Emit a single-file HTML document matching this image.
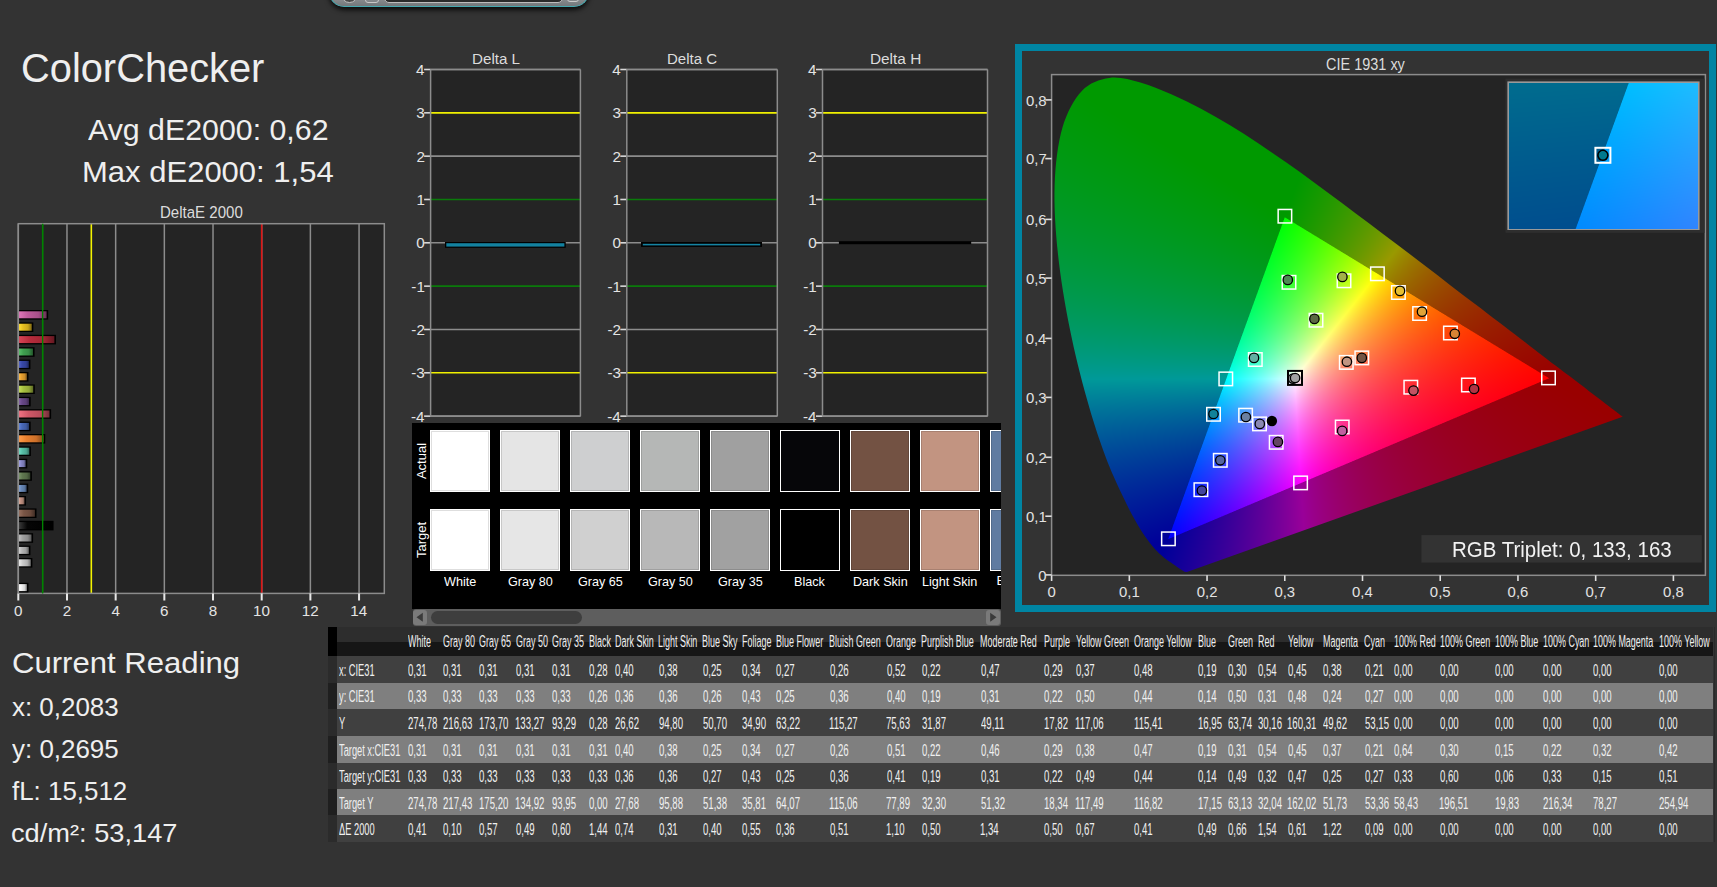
<!DOCTYPE html>
<html><head><meta charset="utf-8"><title>ColorChecker</title>
<style>
html,body{margin:0;padding:0;}
body{width:1717px;height:887px;background:#333333;position:relative;overflow:hidden;font-family:"Liberation Sans",sans-serif;}
.t{position:absolute;white-space:nowrap;line-height:1;transform-origin:0 0;}
.a{position:absolute;box-sizing:border-box;}
svg.ov{position:absolute;left:0;top:0;}
canvas{position:absolute;}
</style></head><body>

<div class="a" style="left:329px;top:-40px;width:260px;height:47px;border-radius:0 0 15px 15px;background:linear-gradient(#9a9da0 70%,#74787b);border:1.3px solid #45a9b0;border-top:none;box-shadow:0 3px 5px rgba(0,0,0,0.8);"></div>
<div class="a" style="left:383.5px;top:-12px;width:179px;height:14.5px;border-radius:0 0 5px 5px;background:#2a2a2a;border:1.2px solid #bdbdbd;"></div>
<div class="a" style="left:341px;top:-14px;width:17px;height:17px;border-radius:0 0 9px 9px;background:#4a4a4a;border:1.2px solid #c0c0c0;"></div>
<div class="a" style="left:365px;top:-10px;width:14px;height:12.5px;border-radius:0 0 3px 3px;border:1px solid #c8c8c8;"></div>
<div class="a" style="left:567px;top:-10px;width:12px;height:12px;border-radius:0 0 3px 3px;border:1px solid #c8c8c8;"></div>
<div class="t" style="left:21.31px;top:49.00px;font-size:40.29px;color:#efefef;transform:scaleX(0.9883);">ColorChecker</div>
<div class="t" style="left:88.32px;top:115.00px;font-size:29.35px;color:#efefef;transform:scaleX(1.0333);">Avg dE2000: 0,62</div>
<div class="t" style="left:82.14px;top:157.00px;font-size:29.50px;color:#efefef;transform:scaleX(1.0512);">Max dE2000: 1,54</div>
<div class="t" style="left:159.96px;top:205.00px;font-size:15.68px;color:#dcdcdc;transform:scaleX(0.9595);">DeltaE 2000</div>
<div class="t" style="left:11.55px;top:648.00px;font-size:29.50px;color:#efefef;transform:scaleX(1.0539);">Current Reading</div>
<div class="t" style="left:11.98px;top:695.00px;font-size:25.61px;color:#efefef;transform:scaleX(1.0123);">x: 0,2083</div>
<div class="t" style="left:12.24px;top:737.00px;font-size:25.32px;color:#efefef;transform:scaleX(1.0246);">y: 0,2695</div>
<div class="t" style="left:11.91px;top:778.00px;font-size:26.33px;color:#efefef;transform:scaleX(0.9844);">fL: 15,512</div>
<div class="t" style="left:11.14px;top:820.00px;font-size:26.33px;color:#efefef;transform:scaleX(1.0340);">cd/m²: 53,147</div>
<div class="t" style="left:14.06px;top:603.00px;font-size:15.20px;color:#e4e4e4;">0</div>
<div class="t" style="left:62.76px;top:603.00px;font-size:15.20px;color:#e4e4e4;">2</div>
<div class="t" style="left:111.48px;top:603.00px;font-size:15.20px;color:#e4e4e4;">4</div>
<div class="t" style="left:160.07px;top:603.00px;font-size:15.20px;color:#e4e4e4;">6</div>
<div class="t" style="left:208.80px;top:603.00px;font-size:15.20px;color:#e4e4e4;">8</div>
<div class="t" style="left:252.98px;top:603.00px;font-size:15.20px;color:#e4e4e4;">10</div>
<div class="t" style="left:301.75px;top:603.00px;font-size:15.20px;color:#e4e4e4;">12</div>
<div class="t" style="left:350.26px;top:603.00px;font-size:15.20px;color:#e4e4e4;">14</div>
<div class="t" style="left:472.05px;top:51.00px;font-size:15.40px;color:#dcdcdc;transform:scaleX(0.9852);">Delta L</div>
<div class="t" style="left:416.08px;top:62.00px;font-size:15.20px;color:#e4e4e4;">4</div>
<div class="t" style="left:416.31px;top:105.00px;font-size:15.20px;color:#e4e4e4;">3</div>
<div class="t" style="left:416.42px;top:149.00px;font-size:15.20px;color:#e4e4e4;">2</div>
<div class="t" style="left:416.39px;top:192.00px;font-size:15.20px;color:#e4e4e4;">1</div>
<div class="t" style="left:416.23px;top:235.00px;font-size:15.20px;color:#e4e4e4;">0</div>
<div class="t" style="left:411.33px;top:279.00px;font-size:15.20px;color:#e4e4e4;">-1</div>
<div class="t" style="left:411.37px;top:322.00px;font-size:15.20px;color:#e4e4e4;">-2</div>
<div class="t" style="left:411.26px;top:365.00px;font-size:15.20px;color:#e4e4e4;">-3</div>
<div class="t" style="left:411.03px;top:409.00px;font-size:15.20px;color:#e4e4e4;">-4</div>
<div class="t" style="left:667.36px;top:51.00px;font-size:15.40px;color:#dcdcdc;transform:scaleX(0.9758);">Delta C</div>
<div class="t" style="left:612.28px;top:62.00px;font-size:15.20px;color:#e4e4e4;">4</div>
<div class="t" style="left:612.51px;top:105.00px;font-size:15.20px;color:#e4e4e4;">3</div>
<div class="t" style="left:612.62px;top:149.00px;font-size:15.20px;color:#e4e4e4;">2</div>
<div class="t" style="left:612.59px;top:192.00px;font-size:15.20px;color:#e4e4e4;">1</div>
<div class="t" style="left:612.43px;top:235.00px;font-size:15.20px;color:#e4e4e4;">0</div>
<div class="t" style="left:607.53px;top:279.00px;font-size:15.20px;color:#e4e4e4;">-1</div>
<div class="t" style="left:607.57px;top:322.00px;font-size:15.20px;color:#e4e4e4;">-2</div>
<div class="t" style="left:607.46px;top:365.00px;font-size:15.20px;color:#e4e4e4;">-3</div>
<div class="t" style="left:607.23px;top:409.00px;font-size:15.20px;color:#e4e4e4;">-4</div>
<div class="t" style="left:869.93px;top:51.00px;font-size:15.40px;color:#dcdcdc;">Delta H</div>
<div class="t" style="left:807.98px;top:62.00px;font-size:15.20px;color:#e4e4e4;">4</div>
<div class="t" style="left:808.21px;top:105.00px;font-size:15.20px;color:#e4e4e4;">3</div>
<div class="t" style="left:808.32px;top:149.00px;font-size:15.20px;color:#e4e4e4;">2</div>
<div class="t" style="left:808.29px;top:192.00px;font-size:15.20px;color:#e4e4e4;">1</div>
<div class="t" style="left:808.13px;top:235.00px;font-size:15.20px;color:#e4e4e4;">0</div>
<div class="t" style="left:803.23px;top:279.00px;font-size:15.20px;color:#e4e4e4;">-1</div>
<div class="t" style="left:803.27px;top:322.00px;font-size:15.20px;color:#e4e4e4;">-2</div>
<div class="t" style="left:803.16px;top:365.00px;font-size:15.20px;color:#e4e4e4;">-3</div>
<div class="t" style="left:802.93px;top:409.00px;font-size:15.20px;color:#e4e4e4;">-4</div>
<div class="a" style="left:412px;top:422.7px;width:588.5px;height:186px;background:#000;"></div>
<div class="a" style="left:412px;top:422.7px;width:588.5px;height:186px;overflow:hidden;">
<div class="a" style="left:18px;top:7.1px;width:60px;height:62px;background:#ffffff;border:1.5px solid #fff;box-shadow:inset 0 0 0 1px rgba(0,0,0,0.13);"></div>
<div class="a" style="left:18px;top:86.3px;width:60px;height:62px;background:#ffffff;border:1.5px solid #fff;box-shadow:inset 0 0 0 1px rgba(0,0,0,0.13);"></div>
<div class="a" style="left:88px;top:7.1px;width:60px;height:62px;background:#e5e5e5;border:1.5px solid #fff;box-shadow:inset 0 0 0 1px rgba(0,0,0,0.13);"></div>
<div class="a" style="left:88px;top:86.3px;width:60px;height:62px;background:#e6e6e6;border:1.5px solid #fff;box-shadow:inset 0 0 0 1px rgba(0,0,0,0.13);"></div>
<div class="a" style="left:158px;top:7.1px;width:60px;height:62px;background:#cecfd0;border:1.5px solid #fff;box-shadow:inset 0 0 0 1px rgba(0,0,0,0.13);"></div>
<div class="a" style="left:158px;top:86.3px;width:60px;height:62px;background:#d0d0d0;border:1.5px solid #fff;box-shadow:inset 0 0 0 1px rgba(0,0,0,0.13);"></div>
<div class="a" style="left:228px;top:7.1px;width:60px;height:62px;background:#b5b7b6;border:1.5px solid #fff;box-shadow:inset 0 0 0 1px rgba(0,0,0,0.13);"></div>
<div class="a" style="left:228px;top:86.3px;width:60px;height:62px;background:#b8b8b8;border:1.5px solid #fff;box-shadow:inset 0 0 0 1px rgba(0,0,0,0.13);"></div>
<div class="a" style="left:298px;top:7.1px;width:60px;height:62px;background:#a0a0a0;border:1.5px solid #fff;box-shadow:inset 0 0 0 1px rgba(0,0,0,0.13);"></div>
<div class="a" style="left:298px;top:86.3px;width:60px;height:62px;background:#a1a1a1;border:1.5px solid #fff;box-shadow:inset 0 0 0 1px rgba(0,0,0,0.13);"></div>
<div class="a" style="left:368px;top:7.1px;width:60px;height:62px;background:#060609;border:1.5px solid #fff;box-shadow:inset 0 0 0 1px rgba(0,0,0,0.13);"></div>
<div class="a" style="left:368px;top:86.3px;width:60px;height:62px;background:#000000;border:1.5px solid #fff;box-shadow:inset 0 0 0 1px rgba(0,0,0,0.13);"></div>
<div class="a" style="left:438px;top:7.1px;width:60px;height:62px;background:#735243;border:1.5px solid #fff;box-shadow:inset 0 0 0 1px rgba(0,0,0,0.13);"></div>
<div class="a" style="left:438px;top:86.3px;width:60px;height:62px;background:#735243;border:1.5px solid #fff;box-shadow:inset 0 0 0 1px rgba(0,0,0,0.13);"></div>
<div class="a" style="left:508px;top:7.1px;width:60px;height:62px;background:#c29481;border:1.5px solid #fff;box-shadow:inset 0 0 0 1px rgba(0,0,0,0.13);"></div>
<div class="a" style="left:508px;top:86.3px;width:60px;height:62px;background:#c29481;border:1.5px solid #fff;box-shadow:inset 0 0 0 1px rgba(0,0,0,0.13);"></div>
<div class="a" style="left:578px;top:7.1px;width:60px;height:62px;background:#5f7ba1;border:1.5px solid #fff;box-shadow:inset 0 0 0 1px rgba(0,0,0,0.13);"></div>
<div class="a" style="left:578px;top:86.3px;width:60px;height:62px;background:#5f7ba1;border:1.5px solid #fff;box-shadow:inset 0 0 0 1px rgba(0,0,0,0.13);"></div>
</div>
<div class="t" style="left:444.13px;top:575.00px;font-size:13.00px;color:#ffffff;transform:scaleX(0.9700);">White</div>
<div class="t" style="left:507.51px;top:575.00px;font-size:13.00px;color:#ffffff;transform:scaleX(0.9700);">Gray 80</div>
<div class="t" style="left:577.52px;top:575.00px;font-size:13.00px;color:#ffffff;transform:scaleX(0.9700);">Gray 65</div>
<div class="t" style="left:647.51px;top:575.00px;font-size:13.00px;color:#ffffff;transform:scaleX(0.9700);">Gray 50</div>
<div class="t" style="left:717.52px;top:575.00px;font-size:13.00px;color:#ffffff;transform:scaleX(0.9700);">Gray 35</div>
<div class="t" style="left:794.06px;top:575.00px;font-size:13.00px;color:#ffffff;transform:scaleX(0.9700);">Black</div>
<div class="t" style="left:852.56px;top:575.00px;font-size:13.00px;color:#ffffff;transform:scaleX(0.9700);">Dark Skin</div>
<div class="t" style="left:922.19px;top:575.00px;font-size:13.00px;color:#ffffff;transform:scaleX(0.9700);">Light Skin</div>
<div class="a" style="left:995px;top:570px;width:5.5px;height:20px;overflow:hidden;"><div class="t" style="left:1.5px;top:4px;font-size:13px;color:#fff;">Blue Sky</div></div>
<div class="t" style="left:420.6px;top:461.2px;font-size:13px;color:#fff;transform:translate(-50%,-50%) rotate(-90deg);transform-origin:50% 50%;">Actual</div>
<div class="t" style="left:420.8px;top:540.2px;font-size:13px;color:#fff;transform:translate(-50%,-50%) rotate(-90deg);transform-origin:50% 50%;">Target</div>
<div class="a" style="left:412.5px;top:608.7px;width:588px;height:17px;background:#5e5e5e;border-radius:3px;"></div>
<div class="a" style="left:413px;top:610px;width:14px;height:14.5px;background:#7a7a7a;border-radius:3px;"></div>
<div class="a" style="left:986px;top:610px;width:14px;height:14.5px;background:#7a7a7a;border-radius:3px;"></div>
<div class="a" style="left:430.5px;top:610.5px;width:151px;height:13.5px;background:#3e3e3e;border-radius:7px;"></div>
<div class="a" style="left:1015px;top:44px;width:701px;height:568px;border:7px solid #0085a3;background:#333;"></div>
<div class="t" style="left:1325.88px;top:57.00px;font-size:15.83px;color:#dcdcdc;transform:scaleX(0.9146);">CIE 1931 xy</div>
<div class="t" style="left:1038.29px;top:569.00px;font-size:14.90px;color:#e2e2e2;">0</div>
<div class="t" style="left:1047.45px;top:585.00px;font-size:14.90px;color:#e2e2e2;">0</div>
<div class="t" style="left:1026.00px;top:510.00px;font-size:14.90px;color:#e2e2e2;">0,1</div>
<div class="t" style="left:1119.03px;top:585.00px;font-size:14.90px;color:#e2e2e2;">0,1</div>
<div class="t" style="left:1026.03px;top:451.00px;font-size:14.90px;color:#e2e2e2;">0,2</div>
<div class="t" style="left:1196.77px;top:585.00px;font-size:14.90px;color:#e2e2e2;">0,2</div>
<div class="t" style="left:1025.92px;top:391.00px;font-size:14.90px;color:#e2e2e2;">0,3</div>
<div class="t" style="left:1274.44px;top:585.00px;font-size:14.90px;color:#e2e2e2;">0,3</div>
<div class="t" style="left:1025.70px;top:332.00px;font-size:14.90px;color:#e2e2e2;">0,4</div>
<div class="t" style="left:1352.05px;top:585.00px;font-size:14.90px;color:#e2e2e2;">0,4</div>
<div class="t" style="left:1025.88px;top:272.00px;font-size:14.90px;color:#e2e2e2;">0,5</div>
<div class="t" style="left:1429.87px;top:585.00px;font-size:14.90px;color:#e2e2e2;">0,5</div>
<div class="t" style="left:1025.92px;top:213.00px;font-size:14.90px;color:#e2e2e2;">0,6</div>
<div class="t" style="left:1507.61px;top:585.00px;font-size:14.90px;color:#e2e2e2;">0,6</div>
<div class="t" style="left:1026.03px;top:152.00px;font-size:14.90px;color:#e2e2e2;">0,7</div>
<div class="t" style="left:1585.39px;top:585.00px;font-size:14.90px;color:#e2e2e2;">0,7</div>
<div class="t" style="left:1025.92px;top:94.00px;font-size:14.90px;color:#e2e2e2;">0,8</div>
<div class="t" style="left:1663.06px;top:585.00px;font-size:14.90px;color:#e2e2e2;">0,8</div>
<div class="a" style="left:328.0px;top:627.3px;width:1384.9px;height:15px;background:#2d2d2d;"></div>
<div class="a" style="left:328.0px;top:642.3px;width:1384.9px;height:13.4px;background:#161616;"></div>
<div class="a" style="left:328.0px;top:627.3px;width:9px;height:28.4px;background:#000;"></div>
<div class="a" style="left:328.0px;top:655.7px;width:1384.9px;height:27.1px;background:#404040;"></div>
<div class="a" style="left:328.0px;top:655.7px;width:9px;height:27.1px;background:#2b2b2b;"></div>
<div class="a" style="left:328.0px;top:682.8px;width:1384.9px;height:26.0px;background:#7f7f7f;"></div>
<div class="a" style="left:328.0px;top:682.8px;width:9px;height:26.0px;background:#1f1f1f;"></div>
<div class="a" style="left:328.0px;top:708.8px;width:1384.9px;height:27.0px;background:#404040;"></div>
<div class="a" style="left:328.0px;top:708.8px;width:9px;height:27.0px;background:#2b2b2b;"></div>
<div class="a" style="left:328.0px;top:735.8px;width:1384.9px;height:27.1px;background:#7f7f7f;"></div>
<div class="a" style="left:328.0px;top:735.8px;width:9px;height:27.1px;background:#1f1f1f;"></div>
<div class="a" style="left:328.0px;top:762.9px;width:1384.9px;height:26.2px;background:#404040;"></div>
<div class="a" style="left:328.0px;top:762.9px;width:9px;height:26.2px;background:#2b2b2b;"></div>
<div class="a" style="left:328.0px;top:789.1px;width:1384.9px;height:26.3px;background:#7f7f7f;"></div>
<div class="a" style="left:328.0px;top:789.1px;width:9px;height:26.3px;background:#1f1f1f;"></div>
<div class="a" style="left:328.0px;top:815.4px;width:1384.9px;height:26.4px;background:#404040;"></div>
<div class="a" style="left:328.0px;top:815.4px;width:9px;height:26.4px;background:#2b2b2b;"></div>
<div class="a" style="left:1713.5px;top:627px;width:1.5px;height:215px;background:#2a2a2a;"></div>
<div class="t" style="left:407.96px;top:634.00px;font-size:16.00px;color:#f0f0f0;transform:scaleX(0.5600);">White</div>
<div class="t" style="left:442.65px;top:634.00px;font-size:16.00px;color:#f0f0f0;transform:scaleX(0.5600);">Gray 80</div>
<div class="t" style="left:479.15px;top:634.00px;font-size:16.00px;color:#f0f0f0;transform:scaleX(0.5600);">Gray 65</div>
<div class="t" style="left:515.65px;top:634.00px;font-size:16.00px;color:#f0f0f0;transform:scaleX(0.5600);">Gray 50</div>
<div class="t" style="left:552.15px;top:634.00px;font-size:16.00px;color:#f0f0f0;transform:scaleX(0.5600);">Gray 35</div>
<div class="t" style="left:588.66px;top:634.00px;font-size:16.00px;color:#f0f0f0;transform:scaleX(0.5600);">Black</div>
<div class="t" style="left:614.96px;top:634.00px;font-size:16.00px;color:#f0f0f0;transform:scaleX(0.5600);">Dark Skin</div>
<div class="t" style="left:658.26px;top:634.00px;font-size:16.00px;color:#f0f0f0;transform:scaleX(0.5600);">Light Skin</div>
<div class="t" style="left:702.16px;top:634.00px;font-size:16.00px;color:#f0f0f0;transform:scaleX(0.5600);">Blue Sky</div>
<div class="t" style="left:741.66px;top:634.00px;font-size:16.00px;color:#f0f0f0;transform:scaleX(0.5600);">Foliage</div>
<div class="t" style="left:775.76px;top:634.00px;font-size:16.00px;color:#f0f0f0;transform:scaleX(0.5600);">Blue Flower</div>
<div class="t" style="left:829.16px;top:634.00px;font-size:16.00px;color:#f0f0f0;transform:scaleX(0.5600);">Bluish Green</div>
<div class="t" style="left:886.47px;top:634.00px;font-size:16.00px;color:#f0f0f0;transform:scaleX(0.5600);">Orange</div>
<div class="t" style="left:921.16px;top:634.00px;font-size:16.00px;color:#f0f0f0;transform:scaleX(0.5600);">Purplish Blue</div>
<div class="t" style="left:980.16px;top:634.00px;font-size:16.00px;color:#f0f0f0;transform:scaleX(0.5600);">Moderate Red</div>
<div class="t" style="left:1043.76px;top:634.00px;font-size:16.00px;color:#f0f0f0;transform:scaleX(0.5600);">Purple</div>
<div class="t" style="left:1076.00px;top:634.00px;font-size:16.00px;color:#f0f0f0;transform:scaleX(0.5600);">Yellow Green</div>
<div class="t" style="left:1134.27px;top:634.00px;font-size:16.00px;color:#f0f0f0;transform:scaleX(0.5600);">Orange Yellow</div>
<div class="t" style="left:1197.56px;top:634.00px;font-size:16.00px;color:#f0f0f0;transform:scaleX(0.5600);">Blue</div>
<div class="t" style="left:1227.55px;top:634.00px;font-size:16.00px;color:#f0f0f0;transform:scaleX(0.5600);">Green</div>
<div class="t" style="left:1257.56px;top:634.00px;font-size:16.00px;color:#f0f0f0;transform:scaleX(0.5600);">Red</div>
<div class="t" style="left:1287.90px;top:634.00px;font-size:16.00px;color:#f0f0f0;transform:scaleX(0.5600);">Yellow</div>
<div class="t" style="left:1322.76px;top:634.00px;font-size:16.00px;color:#f0f0f0;transform:scaleX(0.5600);">Magenta</div>
<div class="t" style="left:1364.45px;top:634.00px;font-size:16.00px;color:#f0f0f0;transform:scaleX(0.5600);">Cyan</div>
<div class="t" style="left:1394.03px;top:634.00px;font-size:16.00px;color:#f0f0f0;transform:scaleX(0.5600);">100% Red</div>
<div class="t" style="left:1439.53px;top:634.00px;font-size:16.00px;color:#f0f0f0;transform:scaleX(0.5600);">100% Green</div>
<div class="t" style="left:1495.03px;top:634.00px;font-size:16.00px;color:#f0f0f0;transform:scaleX(0.5600);">100% Blue</div>
<div class="t" style="left:1542.93px;top:634.00px;font-size:16.00px;color:#f0f0f0;transform:scaleX(0.5600);">100% Cyan</div>
<div class="t" style="left:1592.93px;top:634.00px;font-size:16.00px;color:#f0f0f0;transform:scaleX(0.5600);">100% Magenta</div>
<div class="t" style="left:1658.73px;top:634.00px;font-size:16.00px;color:#f0f0f0;transform:scaleX(0.5600);">100% Yellow</div>
<div class="t" style="left:339.38px;top:663.00px;font-size:16.00px;color:#f0f0f0;transform:scaleX(0.5800);">x: CIE31</div>
<div class="t" style="left:407.62px;top:663.00px;font-size:16.00px;color:#f0f0f0;transform:scaleX(0.6000);">0,31</div>
<div class="t" style="left:442.72px;top:663.00px;font-size:16.00px;color:#f0f0f0;transform:scaleX(0.6000);">0,31</div>
<div class="t" style="left:479.22px;top:663.00px;font-size:16.00px;color:#f0f0f0;transform:scaleX(0.6000);">0,31</div>
<div class="t" style="left:515.72px;top:663.00px;font-size:16.00px;color:#f0f0f0;transform:scaleX(0.6000);">0,31</div>
<div class="t" style="left:552.22px;top:663.00px;font-size:16.00px;color:#f0f0f0;transform:scaleX(0.6000);">0,31</div>
<div class="t" style="left:589.02px;top:663.00px;font-size:16.00px;color:#f0f0f0;transform:scaleX(0.6000);">0,28</div>
<div class="t" style="left:615.32px;top:663.00px;font-size:16.00px;color:#f0f0f0;transform:scaleX(0.6000);">0,40</div>
<div class="t" style="left:658.62px;top:663.00px;font-size:16.00px;color:#f0f0f0;transform:scaleX(0.6000);">0,38</div>
<div class="t" style="left:702.52px;top:663.00px;font-size:16.00px;color:#f0f0f0;transform:scaleX(0.6000);">0,25</div>
<div class="t" style="left:742.02px;top:663.00px;font-size:16.00px;color:#f0f0f0;transform:scaleX(0.6000);">0,34</div>
<div class="t" style="left:776.12px;top:663.00px;font-size:16.00px;color:#f0f0f0;transform:scaleX(0.6000);">0,27</div>
<div class="t" style="left:829.52px;top:663.00px;font-size:16.00px;color:#f0f0f0;transform:scaleX(0.6000);">0,26</div>
<div class="t" style="left:886.52px;top:663.00px;font-size:16.00px;color:#f0f0f0;transform:scaleX(0.6000);">0,52</div>
<div class="t" style="left:921.52px;top:663.00px;font-size:16.00px;color:#f0f0f0;transform:scaleX(0.6000);">0,22</div>
<div class="t" style="left:980.52px;top:663.00px;font-size:16.00px;color:#f0f0f0;transform:scaleX(0.6000);">0,47</div>
<div class="t" style="left:1044.12px;top:663.00px;font-size:16.00px;color:#f0f0f0;transform:scaleX(0.6000);">0,29</div>
<div class="t" style="left:1075.82px;top:663.00px;font-size:16.00px;color:#f0f0f0;transform:scaleX(0.6000);">0,37</div>
<div class="t" style="left:1134.32px;top:663.00px;font-size:16.00px;color:#f0f0f0;transform:scaleX(0.6000);">0,48</div>
<div class="t" style="left:1197.92px;top:663.00px;font-size:16.00px;color:#f0f0f0;transform:scaleX(0.6000);">0,19</div>
<div class="t" style="left:1227.62px;top:663.00px;font-size:16.00px;color:#f0f0f0;transform:scaleX(0.6000);">0,30</div>
<div class="t" style="left:1257.92px;top:663.00px;font-size:16.00px;color:#f0f0f0;transform:scaleX(0.6000);">0,54</div>
<div class="t" style="left:1287.72px;top:663.00px;font-size:16.00px;color:#f0f0f0;transform:scaleX(0.6000);">0,45</div>
<div class="t" style="left:1323.12px;top:663.00px;font-size:16.00px;color:#f0f0f0;transform:scaleX(0.6000);">0,38</div>
<div class="t" style="left:1364.52px;top:663.00px;font-size:16.00px;color:#f0f0f0;transform:scaleX(0.6000);">0,21</div>
<div class="t" style="left:1394.32px;top:663.00px;font-size:16.00px;color:#f0f0f0;transform:scaleX(0.6000);">0,00</div>
<div class="t" style="left:1439.82px;top:663.00px;font-size:16.00px;color:#f0f0f0;transform:scaleX(0.6000);">0,00</div>
<div class="t" style="left:1495.32px;top:663.00px;font-size:16.00px;color:#f0f0f0;transform:scaleX(0.6000);">0,00</div>
<div class="t" style="left:1543.22px;top:663.00px;font-size:16.00px;color:#f0f0f0;transform:scaleX(0.6000);">0,00</div>
<div class="t" style="left:1593.22px;top:663.00px;font-size:16.00px;color:#f0f0f0;transform:scaleX(0.6000);">0,00</div>
<div class="t" style="left:1659.02px;top:663.00px;font-size:16.00px;color:#f0f0f0;transform:scaleX(0.6000);">0,00</div>
<div class="t" style="left:339.48px;top:689.00px;font-size:16.00px;color:#f0f0f0;transform:scaleX(0.5800);">y: CIE31</div>
<div class="t" style="left:407.62px;top:689.00px;font-size:16.00px;color:#f0f0f0;transform:scaleX(0.6000);">0,33</div>
<div class="t" style="left:442.72px;top:689.00px;font-size:16.00px;color:#f0f0f0;transform:scaleX(0.6000);">0,33</div>
<div class="t" style="left:479.22px;top:689.00px;font-size:16.00px;color:#f0f0f0;transform:scaleX(0.6000);">0,33</div>
<div class="t" style="left:515.72px;top:689.00px;font-size:16.00px;color:#f0f0f0;transform:scaleX(0.6000);">0,33</div>
<div class="t" style="left:552.22px;top:689.00px;font-size:16.00px;color:#f0f0f0;transform:scaleX(0.6000);">0,33</div>
<div class="t" style="left:589.02px;top:689.00px;font-size:16.00px;color:#f0f0f0;transform:scaleX(0.6000);">0,26</div>
<div class="t" style="left:615.32px;top:689.00px;font-size:16.00px;color:#f0f0f0;transform:scaleX(0.6000);">0,36</div>
<div class="t" style="left:658.62px;top:689.00px;font-size:16.00px;color:#f0f0f0;transform:scaleX(0.6000);">0,36</div>
<div class="t" style="left:702.52px;top:689.00px;font-size:16.00px;color:#f0f0f0;transform:scaleX(0.6000);">0,26</div>
<div class="t" style="left:742.02px;top:689.00px;font-size:16.00px;color:#f0f0f0;transform:scaleX(0.6000);">0,43</div>
<div class="t" style="left:776.12px;top:689.00px;font-size:16.00px;color:#f0f0f0;transform:scaleX(0.6000);">0,25</div>
<div class="t" style="left:829.52px;top:689.00px;font-size:16.00px;color:#f0f0f0;transform:scaleX(0.6000);">0,36</div>
<div class="t" style="left:886.52px;top:689.00px;font-size:16.00px;color:#f0f0f0;transform:scaleX(0.6000);">0,40</div>
<div class="t" style="left:921.52px;top:689.00px;font-size:16.00px;color:#f0f0f0;transform:scaleX(0.6000);">0,19</div>
<div class="t" style="left:980.52px;top:689.00px;font-size:16.00px;color:#f0f0f0;transform:scaleX(0.6000);">0,31</div>
<div class="t" style="left:1044.12px;top:689.00px;font-size:16.00px;color:#f0f0f0;transform:scaleX(0.6000);">0,22</div>
<div class="t" style="left:1075.82px;top:689.00px;font-size:16.00px;color:#f0f0f0;transform:scaleX(0.6000);">0,50</div>
<div class="t" style="left:1134.32px;top:689.00px;font-size:16.00px;color:#f0f0f0;transform:scaleX(0.6000);">0,44</div>
<div class="t" style="left:1197.92px;top:689.00px;font-size:16.00px;color:#f0f0f0;transform:scaleX(0.6000);">0,14</div>
<div class="t" style="left:1227.62px;top:689.00px;font-size:16.00px;color:#f0f0f0;transform:scaleX(0.6000);">0,50</div>
<div class="t" style="left:1257.92px;top:689.00px;font-size:16.00px;color:#f0f0f0;transform:scaleX(0.6000);">0,31</div>
<div class="t" style="left:1287.72px;top:689.00px;font-size:16.00px;color:#f0f0f0;transform:scaleX(0.6000);">0,48</div>
<div class="t" style="left:1323.12px;top:689.00px;font-size:16.00px;color:#f0f0f0;transform:scaleX(0.6000);">0,24</div>
<div class="t" style="left:1364.52px;top:689.00px;font-size:16.00px;color:#f0f0f0;transform:scaleX(0.6000);">0,27</div>
<div class="t" style="left:1394.32px;top:689.00px;font-size:16.00px;color:#f0f0f0;transform:scaleX(0.6000);">0,00</div>
<div class="t" style="left:1439.82px;top:689.00px;font-size:16.00px;color:#f0f0f0;transform:scaleX(0.6000);">0,00</div>
<div class="t" style="left:1495.32px;top:689.00px;font-size:16.00px;color:#f0f0f0;transform:scaleX(0.6000);">0,00</div>
<div class="t" style="left:1543.22px;top:689.00px;font-size:16.00px;color:#f0f0f0;transform:scaleX(0.6000);">0,00</div>
<div class="t" style="left:1593.22px;top:689.00px;font-size:16.00px;color:#f0f0f0;transform:scaleX(0.6000);">0,00</div>
<div class="t" style="left:1659.02px;top:689.00px;font-size:16.00px;color:#f0f0f0;transform:scaleX(0.6000);">0,00</div>
<div class="t" style="left:339.29px;top:716.00px;font-size:16.00px;color:#f0f0f0;transform:scaleX(0.5800);">Y</div>
<div class="t" style="left:407.52px;top:716.00px;font-size:16.00px;color:#f0f0f0;transform:scaleX(0.6000);">274,78</div>
<div class="t" style="left:442.62px;top:716.00px;font-size:16.00px;color:#f0f0f0;transform:scaleX(0.6000);">216,63</div>
<div class="t" style="left:478.88px;top:716.00px;font-size:16.00px;color:#f0f0f0;transform:scaleX(0.6000);">173,70</div>
<div class="t" style="left:515.38px;top:716.00px;font-size:16.00px;color:#f0f0f0;transform:scaleX(0.6000);">133,27</div>
<div class="t" style="left:552.14px;top:716.00px;font-size:16.00px;color:#f0f0f0;transform:scaleX(0.6000);">93,29</div>
<div class="t" style="left:589.02px;top:716.00px;font-size:16.00px;color:#f0f0f0;transform:scaleX(0.6000);">0,28</div>
<div class="t" style="left:615.22px;top:716.00px;font-size:16.00px;color:#f0f0f0;transform:scaleX(0.6000);">26,62</div>
<div class="t" style="left:658.54px;top:716.00px;font-size:16.00px;color:#f0f0f0;transform:scaleX(0.6000);">94,80</div>
<div class="t" style="left:702.52px;top:716.00px;font-size:16.00px;color:#f0f0f0;transform:scaleX(0.6000);">50,70</div>
<div class="t" style="left:742.04px;top:716.00px;font-size:16.00px;color:#f0f0f0;transform:scaleX(0.6000);">34,90</div>
<div class="t" style="left:776.02px;top:716.00px;font-size:16.00px;color:#f0f0f0;transform:scaleX(0.6000);">63,22</div>
<div class="t" style="left:829.18px;top:716.00px;font-size:16.00px;color:#f0f0f0;transform:scaleX(0.6000);">115,27</div>
<div class="t" style="left:886.42px;top:716.00px;font-size:16.00px;color:#f0f0f0;transform:scaleX(0.6000);">75,63</div>
<div class="t" style="left:921.54px;top:716.00px;font-size:16.00px;color:#f0f0f0;transform:scaleX(0.6000);">31,87</div>
<div class="t" style="left:980.68px;top:716.00px;font-size:16.00px;color:#f0f0f0;transform:scaleX(0.6000);">49,11</div>
<div class="t" style="left:1043.78px;top:716.00px;font-size:16.00px;color:#f0f0f0;transform:scaleX(0.6000);">17,82</div>
<div class="t" style="left:1075.48px;top:716.00px;font-size:16.00px;color:#f0f0f0;transform:scaleX(0.6000);">117,06</div>
<div class="t" style="left:1133.98px;top:716.00px;font-size:16.00px;color:#f0f0f0;transform:scaleX(0.6000);">115,41</div>
<div class="t" style="left:1197.58px;top:716.00px;font-size:16.00px;color:#f0f0f0;transform:scaleX(0.6000);">16,95</div>
<div class="t" style="left:1227.52px;top:716.00px;font-size:16.00px;color:#f0f0f0;transform:scaleX(0.6000);">63,74</div>
<div class="t" style="left:1257.94px;top:716.00px;font-size:16.00px;color:#f0f0f0;transform:scaleX(0.6000);">30,16</div>
<div class="t" style="left:1287.38px;top:716.00px;font-size:16.00px;color:#f0f0f0;transform:scaleX(0.6000);">160,31</div>
<div class="t" style="left:1323.28px;top:716.00px;font-size:16.00px;color:#f0f0f0;transform:scaleX(0.6000);">49,62</div>
<div class="t" style="left:1364.52px;top:716.00px;font-size:16.00px;color:#f0f0f0;transform:scaleX(0.6000);">53,15</div>
<div class="t" style="left:1394.32px;top:716.00px;font-size:16.00px;color:#f0f0f0;transform:scaleX(0.6000);">0,00</div>
<div class="t" style="left:1439.82px;top:716.00px;font-size:16.00px;color:#f0f0f0;transform:scaleX(0.6000);">0,00</div>
<div class="t" style="left:1495.32px;top:716.00px;font-size:16.00px;color:#f0f0f0;transform:scaleX(0.6000);">0,00</div>
<div class="t" style="left:1543.22px;top:716.00px;font-size:16.00px;color:#f0f0f0;transform:scaleX(0.6000);">0,00</div>
<div class="t" style="left:1593.22px;top:716.00px;font-size:16.00px;color:#f0f0f0;transform:scaleX(0.6000);">0,00</div>
<div class="t" style="left:1659.02px;top:716.00px;font-size:16.00px;color:#f0f0f0;transform:scaleX(0.6000);">0,00</div>
<div class="t" style="left:339.29px;top:743.00px;font-size:16.00px;color:#f0f0f0;transform:scaleX(0.5800);">Target x:CIE31</div>
<div class="t" style="left:407.62px;top:743.00px;font-size:16.00px;color:#f0f0f0;transform:scaleX(0.6000);">0,31</div>
<div class="t" style="left:442.72px;top:743.00px;font-size:16.00px;color:#f0f0f0;transform:scaleX(0.6000);">0,31</div>
<div class="t" style="left:479.22px;top:743.00px;font-size:16.00px;color:#f0f0f0;transform:scaleX(0.6000);">0,31</div>
<div class="t" style="left:515.72px;top:743.00px;font-size:16.00px;color:#f0f0f0;transform:scaleX(0.6000);">0,31</div>
<div class="t" style="left:552.22px;top:743.00px;font-size:16.00px;color:#f0f0f0;transform:scaleX(0.6000);">0,31</div>
<div class="t" style="left:589.02px;top:743.00px;font-size:16.00px;color:#f0f0f0;transform:scaleX(0.6000);">0,31</div>
<div class="t" style="left:615.32px;top:743.00px;font-size:16.00px;color:#f0f0f0;transform:scaleX(0.6000);">0,40</div>
<div class="t" style="left:658.62px;top:743.00px;font-size:16.00px;color:#f0f0f0;transform:scaleX(0.6000);">0,38</div>
<div class="t" style="left:702.52px;top:743.00px;font-size:16.00px;color:#f0f0f0;transform:scaleX(0.6000);">0,25</div>
<div class="t" style="left:742.02px;top:743.00px;font-size:16.00px;color:#f0f0f0;transform:scaleX(0.6000);">0,34</div>
<div class="t" style="left:776.12px;top:743.00px;font-size:16.00px;color:#f0f0f0;transform:scaleX(0.6000);">0,27</div>
<div class="t" style="left:829.52px;top:743.00px;font-size:16.00px;color:#f0f0f0;transform:scaleX(0.6000);">0,26</div>
<div class="t" style="left:886.52px;top:743.00px;font-size:16.00px;color:#f0f0f0;transform:scaleX(0.6000);">0,51</div>
<div class="t" style="left:921.52px;top:743.00px;font-size:16.00px;color:#f0f0f0;transform:scaleX(0.6000);">0,22</div>
<div class="t" style="left:980.52px;top:743.00px;font-size:16.00px;color:#f0f0f0;transform:scaleX(0.6000);">0,46</div>
<div class="t" style="left:1044.12px;top:743.00px;font-size:16.00px;color:#f0f0f0;transform:scaleX(0.6000);">0,29</div>
<div class="t" style="left:1075.82px;top:743.00px;font-size:16.00px;color:#f0f0f0;transform:scaleX(0.6000);">0,38</div>
<div class="t" style="left:1134.32px;top:743.00px;font-size:16.00px;color:#f0f0f0;transform:scaleX(0.6000);">0,47</div>
<div class="t" style="left:1197.92px;top:743.00px;font-size:16.00px;color:#f0f0f0;transform:scaleX(0.6000);">0,19</div>
<div class="t" style="left:1227.62px;top:743.00px;font-size:16.00px;color:#f0f0f0;transform:scaleX(0.6000);">0,31</div>
<div class="t" style="left:1257.92px;top:743.00px;font-size:16.00px;color:#f0f0f0;transform:scaleX(0.6000);">0,54</div>
<div class="t" style="left:1287.72px;top:743.00px;font-size:16.00px;color:#f0f0f0;transform:scaleX(0.6000);">0,45</div>
<div class="t" style="left:1323.12px;top:743.00px;font-size:16.00px;color:#f0f0f0;transform:scaleX(0.6000);">0,37</div>
<div class="t" style="left:1364.52px;top:743.00px;font-size:16.00px;color:#f0f0f0;transform:scaleX(0.6000);">0,21</div>
<div class="t" style="left:1394.32px;top:743.00px;font-size:16.00px;color:#f0f0f0;transform:scaleX(0.6000);">0,64</div>
<div class="t" style="left:1439.82px;top:743.00px;font-size:16.00px;color:#f0f0f0;transform:scaleX(0.6000);">0,30</div>
<div class="t" style="left:1495.32px;top:743.00px;font-size:16.00px;color:#f0f0f0;transform:scaleX(0.6000);">0,15</div>
<div class="t" style="left:1543.22px;top:743.00px;font-size:16.00px;color:#f0f0f0;transform:scaleX(0.6000);">0,22</div>
<div class="t" style="left:1593.22px;top:743.00px;font-size:16.00px;color:#f0f0f0;transform:scaleX(0.6000);">0,32</div>
<div class="t" style="left:1659.02px;top:743.00px;font-size:16.00px;color:#f0f0f0;transform:scaleX(0.6000);">0,42</div>
<div class="t" style="left:339.29px;top:769.00px;font-size:16.00px;color:#f0f0f0;transform:scaleX(0.5800);">Target y:CIE31</div>
<div class="t" style="left:407.62px;top:769.00px;font-size:16.00px;color:#f0f0f0;transform:scaleX(0.6000);">0,33</div>
<div class="t" style="left:442.72px;top:769.00px;font-size:16.00px;color:#f0f0f0;transform:scaleX(0.6000);">0,33</div>
<div class="t" style="left:479.22px;top:769.00px;font-size:16.00px;color:#f0f0f0;transform:scaleX(0.6000);">0,33</div>
<div class="t" style="left:515.72px;top:769.00px;font-size:16.00px;color:#f0f0f0;transform:scaleX(0.6000);">0,33</div>
<div class="t" style="left:552.22px;top:769.00px;font-size:16.00px;color:#f0f0f0;transform:scaleX(0.6000);">0,33</div>
<div class="t" style="left:589.02px;top:769.00px;font-size:16.00px;color:#f0f0f0;transform:scaleX(0.6000);">0,33</div>
<div class="t" style="left:615.32px;top:769.00px;font-size:16.00px;color:#f0f0f0;transform:scaleX(0.6000);">0,36</div>
<div class="t" style="left:658.62px;top:769.00px;font-size:16.00px;color:#f0f0f0;transform:scaleX(0.6000);">0,36</div>
<div class="t" style="left:702.52px;top:769.00px;font-size:16.00px;color:#f0f0f0;transform:scaleX(0.6000);">0,27</div>
<div class="t" style="left:742.02px;top:769.00px;font-size:16.00px;color:#f0f0f0;transform:scaleX(0.6000);">0,43</div>
<div class="t" style="left:776.12px;top:769.00px;font-size:16.00px;color:#f0f0f0;transform:scaleX(0.6000);">0,25</div>
<div class="t" style="left:829.52px;top:769.00px;font-size:16.00px;color:#f0f0f0;transform:scaleX(0.6000);">0,36</div>
<div class="t" style="left:886.52px;top:769.00px;font-size:16.00px;color:#f0f0f0;transform:scaleX(0.6000);">0,41</div>
<div class="t" style="left:921.52px;top:769.00px;font-size:16.00px;color:#f0f0f0;transform:scaleX(0.6000);">0,19</div>
<div class="t" style="left:980.52px;top:769.00px;font-size:16.00px;color:#f0f0f0;transform:scaleX(0.6000);">0,31</div>
<div class="t" style="left:1044.12px;top:769.00px;font-size:16.00px;color:#f0f0f0;transform:scaleX(0.6000);">0,22</div>
<div class="t" style="left:1075.82px;top:769.00px;font-size:16.00px;color:#f0f0f0;transform:scaleX(0.6000);">0,49</div>
<div class="t" style="left:1134.32px;top:769.00px;font-size:16.00px;color:#f0f0f0;transform:scaleX(0.6000);">0,44</div>
<div class="t" style="left:1197.92px;top:769.00px;font-size:16.00px;color:#f0f0f0;transform:scaleX(0.6000);">0,14</div>
<div class="t" style="left:1227.62px;top:769.00px;font-size:16.00px;color:#f0f0f0;transform:scaleX(0.6000);">0,49</div>
<div class="t" style="left:1257.92px;top:769.00px;font-size:16.00px;color:#f0f0f0;transform:scaleX(0.6000);">0,32</div>
<div class="t" style="left:1287.72px;top:769.00px;font-size:16.00px;color:#f0f0f0;transform:scaleX(0.6000);">0,47</div>
<div class="t" style="left:1323.12px;top:769.00px;font-size:16.00px;color:#f0f0f0;transform:scaleX(0.6000);">0,25</div>
<div class="t" style="left:1364.52px;top:769.00px;font-size:16.00px;color:#f0f0f0;transform:scaleX(0.6000);">0,27</div>
<div class="t" style="left:1394.32px;top:769.00px;font-size:16.00px;color:#f0f0f0;transform:scaleX(0.6000);">0,33</div>
<div class="t" style="left:1439.82px;top:769.00px;font-size:16.00px;color:#f0f0f0;transform:scaleX(0.6000);">0,60</div>
<div class="t" style="left:1495.32px;top:769.00px;font-size:16.00px;color:#f0f0f0;transform:scaleX(0.6000);">0,06</div>
<div class="t" style="left:1543.22px;top:769.00px;font-size:16.00px;color:#f0f0f0;transform:scaleX(0.6000);">0,33</div>
<div class="t" style="left:1593.22px;top:769.00px;font-size:16.00px;color:#f0f0f0;transform:scaleX(0.6000);">0,15</div>
<div class="t" style="left:1659.02px;top:769.00px;font-size:16.00px;color:#f0f0f0;transform:scaleX(0.6000);">0,51</div>
<div class="t" style="left:339.29px;top:796.00px;font-size:16.00px;color:#f0f0f0;transform:scaleX(0.5800);">Target Y</div>
<div class="t" style="left:407.52px;top:796.00px;font-size:16.00px;color:#f0f0f0;transform:scaleX(0.6000);">274,78</div>
<div class="t" style="left:442.62px;top:796.00px;font-size:16.00px;color:#f0f0f0;transform:scaleX(0.6000);">217,43</div>
<div class="t" style="left:478.88px;top:796.00px;font-size:16.00px;color:#f0f0f0;transform:scaleX(0.6000);">175,20</div>
<div class="t" style="left:515.38px;top:796.00px;font-size:16.00px;color:#f0f0f0;transform:scaleX(0.6000);">134,92</div>
<div class="t" style="left:552.14px;top:796.00px;font-size:16.00px;color:#f0f0f0;transform:scaleX(0.6000);">93,95</div>
<div class="t" style="left:589.02px;top:796.00px;font-size:16.00px;color:#f0f0f0;transform:scaleX(0.6000);">0,00</div>
<div class="t" style="left:615.22px;top:796.00px;font-size:16.00px;color:#f0f0f0;transform:scaleX(0.6000);">27,68</div>
<div class="t" style="left:658.54px;top:796.00px;font-size:16.00px;color:#f0f0f0;transform:scaleX(0.6000);">95,88</div>
<div class="t" style="left:702.52px;top:796.00px;font-size:16.00px;color:#f0f0f0;transform:scaleX(0.6000);">51,38</div>
<div class="t" style="left:742.04px;top:796.00px;font-size:16.00px;color:#f0f0f0;transform:scaleX(0.6000);">35,81</div>
<div class="t" style="left:776.02px;top:796.00px;font-size:16.00px;color:#f0f0f0;transform:scaleX(0.6000);">64,07</div>
<div class="t" style="left:829.18px;top:796.00px;font-size:16.00px;color:#f0f0f0;transform:scaleX(0.6000);">115,06</div>
<div class="t" style="left:886.42px;top:796.00px;font-size:16.00px;color:#f0f0f0;transform:scaleX(0.6000);">77,89</div>
<div class="t" style="left:921.54px;top:796.00px;font-size:16.00px;color:#f0f0f0;transform:scaleX(0.6000);">32,30</div>
<div class="t" style="left:980.52px;top:796.00px;font-size:16.00px;color:#f0f0f0;transform:scaleX(0.6000);">51,32</div>
<div class="t" style="left:1043.78px;top:796.00px;font-size:16.00px;color:#f0f0f0;transform:scaleX(0.6000);">18,34</div>
<div class="t" style="left:1075.48px;top:796.00px;font-size:16.00px;color:#f0f0f0;transform:scaleX(0.6000);">117,49</div>
<div class="t" style="left:1133.98px;top:796.00px;font-size:16.00px;color:#f0f0f0;transform:scaleX(0.6000);">116,82</div>
<div class="t" style="left:1197.58px;top:796.00px;font-size:16.00px;color:#f0f0f0;transform:scaleX(0.6000);">17,15</div>
<div class="t" style="left:1227.52px;top:796.00px;font-size:16.00px;color:#f0f0f0;transform:scaleX(0.6000);">63,13</div>
<div class="t" style="left:1257.94px;top:796.00px;font-size:16.00px;color:#f0f0f0;transform:scaleX(0.6000);">32,04</div>
<div class="t" style="left:1287.38px;top:796.00px;font-size:16.00px;color:#f0f0f0;transform:scaleX(0.6000);">162,02</div>
<div class="t" style="left:1323.12px;top:796.00px;font-size:16.00px;color:#f0f0f0;transform:scaleX(0.6000);">51,73</div>
<div class="t" style="left:1364.52px;top:796.00px;font-size:16.00px;color:#f0f0f0;transform:scaleX(0.6000);">53,36</div>
<div class="t" style="left:1394.32px;top:796.00px;font-size:16.00px;color:#f0f0f0;transform:scaleX(0.6000);">58,43</div>
<div class="t" style="left:1439.48px;top:796.00px;font-size:16.00px;color:#f0f0f0;transform:scaleX(0.6000);">196,51</div>
<div class="t" style="left:1494.98px;top:796.00px;font-size:16.00px;color:#f0f0f0;transform:scaleX(0.6000);">19,83</div>
<div class="t" style="left:1543.12px;top:796.00px;font-size:16.00px;color:#f0f0f0;transform:scaleX(0.6000);">216,34</div>
<div class="t" style="left:1593.12px;top:796.00px;font-size:16.00px;color:#f0f0f0;transform:scaleX(0.6000);">78,27</div>
<div class="t" style="left:1658.92px;top:796.00px;font-size:16.00px;color:#f0f0f0;transform:scaleX(0.6000);">254,94</div>
<div class="t" style="left:339.22px;top:822.00px;font-size:16.00px;color:#f0f0f0;transform:scaleX(0.5800);">ΔE 2000</div>
<div class="t" style="left:407.62px;top:822.00px;font-size:16.00px;color:#f0f0f0;transform:scaleX(0.6000);">0,41</div>
<div class="t" style="left:442.72px;top:822.00px;font-size:16.00px;color:#f0f0f0;transform:scaleX(0.6000);">0,10</div>
<div class="t" style="left:479.22px;top:822.00px;font-size:16.00px;color:#f0f0f0;transform:scaleX(0.6000);">0,57</div>
<div class="t" style="left:515.72px;top:822.00px;font-size:16.00px;color:#f0f0f0;transform:scaleX(0.6000);">0,49</div>
<div class="t" style="left:552.22px;top:822.00px;font-size:16.00px;color:#f0f0f0;transform:scaleX(0.6000);">0,60</div>
<div class="t" style="left:588.68px;top:822.00px;font-size:16.00px;color:#f0f0f0;transform:scaleX(0.6000);">1,44</div>
<div class="t" style="left:615.32px;top:822.00px;font-size:16.00px;color:#f0f0f0;transform:scaleX(0.6000);">0,74</div>
<div class="t" style="left:658.62px;top:822.00px;font-size:16.00px;color:#f0f0f0;transform:scaleX(0.6000);">0,31</div>
<div class="t" style="left:702.52px;top:822.00px;font-size:16.00px;color:#f0f0f0;transform:scaleX(0.6000);">0,40</div>
<div class="t" style="left:742.02px;top:822.00px;font-size:16.00px;color:#f0f0f0;transform:scaleX(0.6000);">0,55</div>
<div class="t" style="left:776.12px;top:822.00px;font-size:16.00px;color:#f0f0f0;transform:scaleX(0.6000);">0,36</div>
<div class="t" style="left:829.52px;top:822.00px;font-size:16.00px;color:#f0f0f0;transform:scaleX(0.6000);">0,51</div>
<div class="t" style="left:886.18px;top:822.00px;font-size:16.00px;color:#f0f0f0;transform:scaleX(0.6000);">1,10</div>
<div class="t" style="left:921.52px;top:822.00px;font-size:16.00px;color:#f0f0f0;transform:scaleX(0.6000);">0,50</div>
<div class="t" style="left:980.18px;top:822.00px;font-size:16.00px;color:#f0f0f0;transform:scaleX(0.6000);">1,34</div>
<div class="t" style="left:1044.12px;top:822.00px;font-size:16.00px;color:#f0f0f0;transform:scaleX(0.6000);">0,50</div>
<div class="t" style="left:1075.82px;top:822.00px;font-size:16.00px;color:#f0f0f0;transform:scaleX(0.6000);">0,67</div>
<div class="t" style="left:1134.32px;top:822.00px;font-size:16.00px;color:#f0f0f0;transform:scaleX(0.6000);">0,41</div>
<div class="t" style="left:1197.92px;top:822.00px;font-size:16.00px;color:#f0f0f0;transform:scaleX(0.6000);">0,49</div>
<div class="t" style="left:1227.62px;top:822.00px;font-size:16.00px;color:#f0f0f0;transform:scaleX(0.6000);">0,66</div>
<div class="t" style="left:1257.58px;top:822.00px;font-size:16.00px;color:#f0f0f0;transform:scaleX(0.6000);">1,54</div>
<div class="t" style="left:1287.72px;top:822.00px;font-size:16.00px;color:#f0f0f0;transform:scaleX(0.6000);">0,61</div>
<div class="t" style="left:1322.78px;top:822.00px;font-size:16.00px;color:#f0f0f0;transform:scaleX(0.6000);">1,22</div>
<div class="t" style="left:1364.52px;top:822.00px;font-size:16.00px;color:#f0f0f0;transform:scaleX(0.6000);">0,09</div>
<div class="t" style="left:1394.32px;top:822.00px;font-size:16.00px;color:#f0f0f0;transform:scaleX(0.6000);">0,00</div>
<div class="t" style="left:1439.82px;top:822.00px;font-size:16.00px;color:#f0f0f0;transform:scaleX(0.6000);">0,00</div>
<div class="t" style="left:1495.32px;top:822.00px;font-size:16.00px;color:#f0f0f0;transform:scaleX(0.6000);">0,00</div>
<div class="t" style="left:1543.22px;top:822.00px;font-size:16.00px;color:#f0f0f0;transform:scaleX(0.6000);">0,00</div>
<div class="t" style="left:1593.22px;top:822.00px;font-size:16.00px;color:#f0f0f0;transform:scaleX(0.6000);">0,00</div>
<div class="t" style="left:1659.02px;top:822.00px;font-size:16.00px;color:#f0f0f0;transform:scaleX(0.6000);">0,00</div>
<svg class="ov" width="1717" height="887"><defs><linearGradient id="bg1" x1="0" x2="1" y1="0" y2="0"><stop offset="0" stop-color="#df76b9"/><stop offset="0.3" stop-color="#c05c9c"/><stop offset="0.7" stop-color="#a85089"/><stop offset="1" stop-color="#693255"/></linearGradient><linearGradient id="bg2" x1="0" x2="1" y1="0" y2="0"><stop offset="0" stop-color="#ffdf37"/><stop offset="0.3" stop-color="#e8c020"/><stop offset="0.7" stop-color="#cca81c"/><stop offset="1" stop-color="#7f6911"/></linearGradient><linearGradient id="bg3" x1="0" x2="1" y1="0" y2="0"><stop offset="0" stop-color="#d74455"/><stop offset="0.3" stop-color="#b82c3c"/><stop offset="0.7" stop-color="#a12634"/><stop offset="1" stop-color="#651821"/></linearGradient><linearGradient id="bg4" x1="0" x2="1" y1="0" y2="0"><stop offset="0" stop-color="#59be6a"/><stop offset="0.3" stop-color="#40a050"/><stop offset="0.7" stop-color="#388c46"/><stop offset="1" stop-color="#23582c"/></linearGradient><linearGradient id="bg5" x1="0" x2="1" y1="0" y2="0"><stop offset="0" stop-color="#5061c6"/><stop offset="0.3" stop-color="#3848a8"/><stop offset="0.7" stop-color="#313f93"/><stop offset="1" stop-color="#1e275c"/></linearGradient><linearGradient id="bg6" x1="0" x2="1" y1="0" y2="0"><stop offset="0" stop-color="#ffbe48"/><stop offset="0.3" stop-color="#e8a030"/><stop offset="0.7" stop-color="#cc8c2a"/><stop offset="1" stop-color="#7f581a"/></linearGradient><linearGradient id="bg7" x1="0" x2="1" y1="0" y2="0"><stop offset="0" stop-color="#c6df59"/><stop offset="0.3" stop-color="#a8c040"/><stop offset="0.7" stop-color="#93a838"/><stop offset="1" stop-color="#5c6923"/></linearGradient><linearGradient id="bg8" x1="0" x2="1" y1="0" y2="0"><stop offset="0" stop-color="#8361a4"/><stop offset="0.3" stop-color="#684888"/><stop offset="0.7" stop-color="#5b3f77"/><stop offset="1" stop-color="#39274a"/></linearGradient><linearGradient id="bg9" x1="0" x2="1" y1="0" y2="0"><stop offset="0" stop-color="#f07283"/><stop offset="0.3" stop-color="#d05868"/><stop offset="0.7" stop-color="#b74d5b"/><stop offset="1" stop-color="#723039"/></linearGradient><linearGradient id="bg10" x1="0" x2="1" y1="0" y2="0"><stop offset="0" stop-color="#6183d7"/><stop offset="0.3" stop-color="#4868b8"/><stop offset="0.7" stop-color="#3f5ba1"/><stop offset="1" stop-color="#273965"/></linearGradient><linearGradient id="bg11" x1="0" x2="1" y1="0" y2="0"><stop offset="0" stop-color="#ff9c48"/><stop offset="0.3" stop-color="#e88030"/><stop offset="0.7" stop-color="#cc702a"/><stop offset="1" stop-color="#7f461a"/></linearGradient><linearGradient id="bg12" x1="0" x2="1" y1="0" y2="0"><stop offset="0" stop-color="#72dfc6"/><stop offset="0.3" stop-color="#58c0a8"/><stop offset="0.7" stop-color="#4da893"/><stop offset="1" stop-color="#30695c"/></linearGradient><linearGradient id="bg13" x1="0" x2="1" y1="0" y2="0"><stop offset="0" stop-color="#a4a4e8"/><stop offset="0.3" stop-color="#8888c8"/><stop offset="0.7" stop-color="#7777b0"/><stop offset="1" stop-color="#4a4a6e"/></linearGradient><linearGradient id="bg14" x1="0" x2="1" y1="0" y2="0"><stop offset="0" stop-color="#7a946a"/><stop offset="0.3" stop-color="#607850"/><stop offset="0.7" stop-color="#546946"/><stop offset="1" stop-color="#34422c"/></linearGradient><linearGradient id="bg15" x1="0" x2="1" y1="0" y2="0"><stop offset="0" stop-color="#83a4d7"/><stop offset="0.3" stop-color="#6888b8"/><stop offset="0.7" stop-color="#5b77a1"/><stop offset="1" stop-color="#394a65"/></linearGradient><linearGradient id="bg16" x1="0" x2="1" y1="0" y2="0"><stop offset="0" stop-color="#dfad9c"/><stop offset="0.3" stop-color="#c09080"/><stop offset="0.7" stop-color="#a87e70"/><stop offset="1" stop-color="#694f46"/></linearGradient><linearGradient id="bg17" x1="0" x2="1" y1="0" y2="0"><stop offset="0" stop-color="#96705f"/><stop offset="0.3" stop-color="#7a5646"/><stop offset="0.7" stop-color="#6b4b3d"/><stop offset="1" stop-color="#432f26"/></linearGradient><linearGradient id="bg18" x1="0" x2="1" y1="0" y2="0"><stop offset="0" stop-color="#3a3a3a"/><stop offset="0.25" stop-color="#050505"/><stop offset="1" stop-color="#000"/></linearGradient><linearGradient id="bg19" x1="0" x2="1" y1="0" y2="0"><stop offset="0" stop-color="#bebebe"/><stop offset="0.3" stop-color="#a0a0a0"/><stop offset="0.7" stop-color="#8c8c8c"/><stop offset="1" stop-color="#585858"/></linearGradient><linearGradient id="bg20" x1="0" x2="1" y1="0" y2="0"><stop offset="0" stop-color="#d3d3d3"/><stop offset="0.3" stop-color="#b4b4b4"/><stop offset="0.7" stop-color="#9e9e9e"/><stop offset="1" stop-color="#636363"/></linearGradient><linearGradient id="bg21" x1="0" x2="1" y1="0" y2="0"><stop offset="0" stop-color="#ececec"/><stop offset="0.3" stop-color="#cccccc"/><stop offset="0.7" stop-color="#b3b3b3"/><stop offset="1" stop-color="#707070"/></linearGradient><linearGradient id="bg23" x1="0" x2="1" y1="0" y2="0"><stop offset="0" stop-color="#ffffff"/><stop offset="0.3" stop-color="#f4f4f4"/><stop offset="0.7" stop-color="#d6d6d6"/><stop offset="1" stop-color="#868686"/></linearGradient></defs><rect x="18.3" y="223.7" width="366.0" height="369.7" fill="#242424"/>
<line x1="66.98" y1="223.7" x2="66.98" y2="593.4" stroke="#8c8c8c" stroke-width="1.5"/>
<line x1="115.66" y1="223.7" x2="115.66" y2="593.4" stroke="#8c8c8c" stroke-width="1.5"/>
<line x1="164.34" y1="223.7" x2="164.34" y2="593.4" stroke="#8c8c8c" stroke-width="1.5"/>
<line x1="213.02" y1="223.7" x2="213.02" y2="593.4" stroke="#8c8c8c" stroke-width="1.5"/>
<line x1="261.70" y1="223.7" x2="261.70" y2="593.4" stroke="#8c8c8c" stroke-width="1.5"/>
<line x1="310.38" y1="223.7" x2="310.38" y2="593.4" stroke="#8c8c8c" stroke-width="1.5"/>
<line x1="359.06" y1="223.7" x2="359.06" y2="593.4" stroke="#8c8c8c" stroke-width="1.5"/>
<line x1="42.64" y1="223.7" x2="42.64" y2="593.4" stroke="#008200" stroke-width="1.4"/>
<line x1="91.32" y1="223.7" x2="91.32" y2="593.4" stroke="#f4f400" stroke-width="1.6"/>
<line x1="261.70" y1="223.7" x2="261.70" y2="593.4" stroke="#dd1515" stroke-width="1.6"/>
<rect x="18.3" y="223.7" width="366.0" height="369.7" fill="none" stroke="#8c8c8c" stroke-width="1.5"/>
<line x1="18.30" y1="593.4" x2="18.30" y2="600.5" stroke="#e8e8e8" stroke-width="2"/>
<line x1="66.98" y1="593.4" x2="66.98" y2="600.5" stroke="#e8e8e8" stroke-width="2"/>
<line x1="115.66" y1="593.4" x2="115.66" y2="600.5" stroke="#e8e8e8" stroke-width="2"/>
<line x1="164.34" y1="593.4" x2="164.34" y2="600.5" stroke="#e8e8e8" stroke-width="2"/>
<line x1="213.02" y1="593.4" x2="213.02" y2="600.5" stroke="#e8e8e8" stroke-width="2"/>
<line x1="261.70" y1="593.4" x2="261.70" y2="600.5" stroke="#e8e8e8" stroke-width="2"/>
<line x1="310.38" y1="593.4" x2="310.38" y2="600.5" stroke="#e8e8e8" stroke-width="2"/>
<line x1="359.06" y1="593.4" x2="359.06" y2="600.5" stroke="#e8e8e8" stroke-width="2"/>
<rect x="18.80" y="310.00" width="29.39" height="9.6" fill="#000"/>
<rect x="19.00" y="311.30" width="27.59" height="7.0" fill="url(#bg1)"/>
<rect x="18.80" y="322.40" width="14.55" height="9.6" fill="#000"/>
<rect x="19.00" y="323.70" width="12.75" height="7.0" fill="url(#bg2)"/>
<rect x="18.80" y="334.80" width="37.18" height="9.6" fill="#000"/>
<rect x="19.00" y="336.10" width="35.38" height="7.0" fill="url(#bg3)"/>
<rect x="18.80" y="347.20" width="15.76" height="9.6" fill="#000"/>
<rect x="19.00" y="348.50" width="13.96" height="7.0" fill="url(#bg4)"/>
<rect x="18.80" y="359.60" width="11.63" height="9.6" fill="#000"/>
<rect x="19.00" y="360.90" width="9.83" height="7.0" fill="url(#bg5)"/>
<rect x="18.80" y="372.00" width="9.68" height="9.6" fill="#000"/>
<rect x="19.00" y="373.30" width="7.88" height="7.0" fill="url(#bg6)"/>
<rect x="18.80" y="384.40" width="16.01" height="9.6" fill="#000"/>
<rect x="19.00" y="385.70" width="14.21" height="7.0" fill="url(#bg7)"/>
<rect x="18.80" y="396.80" width="11.87" height="9.6" fill="#000"/>
<rect x="19.00" y="398.10" width="10.07" height="7.0" fill="url(#bg8)"/>
<rect x="18.80" y="409.20" width="32.32" height="9.6" fill="#000"/>
<rect x="19.00" y="410.50" width="30.52" height="7.0" fill="url(#bg9)"/>
<rect x="18.80" y="421.60" width="11.87" height="9.6" fill="#000"/>
<rect x="19.00" y="422.90" width="10.07" height="7.0" fill="url(#bg10)"/>
<rect x="18.80" y="434.00" width="26.47" height="9.6" fill="#000"/>
<rect x="19.00" y="435.30" width="24.67" height="7.0" fill="url(#bg11)"/>
<rect x="18.80" y="446.40" width="12.11" height="9.6" fill="#000"/>
<rect x="19.00" y="447.70" width="10.31" height="7.0" fill="url(#bg12)"/>
<rect x="18.80" y="458.80" width="8.46" height="9.6" fill="#000"/>
<rect x="19.00" y="460.10" width="6.66" height="7.0" fill="url(#bg13)"/>
<rect x="18.80" y="471.20" width="13.09" height="9.6" fill="#000"/>
<rect x="19.00" y="472.50" width="11.29" height="7.0" fill="url(#bg14)"/>
<rect x="18.80" y="483.60" width="9.44" height="9.6" fill="#000"/>
<rect x="19.00" y="484.90" width="7.64" height="7.0" fill="url(#bg15)"/>
<rect x="18.80" y="496.00" width="7.25" height="9.6" fill="#000"/>
<rect x="19.00" y="497.30" width="5.45" height="7.0" fill="url(#bg16)"/>
<rect x="18.80" y="508.40" width="17.71" height="9.6" fill="#000"/>
<rect x="19.00" y="509.70" width="15.91" height="7.0" fill="url(#bg17)"/>
<rect x="18.80" y="520.80" width="34.75" height="9.6" fill="#000"/>
<rect x="19.00" y="522.10" width="32.95" height="7.0" fill="url(#bg18)"/>
<rect x="18.80" y="533.20" width="14.30" height="9.6" fill="#000"/>
<rect x="19.00" y="534.50" width="12.50" height="7.0" fill="url(#bg19)"/>
<rect x="18.80" y="545.60" width="11.63" height="9.6" fill="#000"/>
<rect x="19.00" y="546.90" width="9.83" height="7.0" fill="url(#bg20)"/>
<rect x="18.80" y="558.00" width="13.57" height="9.6" fill="#000"/>
<rect x="19.00" y="559.30" width="11.77" height="7.0" fill="url(#bg21)"/>
<rect x="18.80" y="582.80" width="9.68" height="9.6" fill="#000"/>
<rect x="19.00" y="584.10" width="7.88" height="7.0" fill="url(#bg23)"/>
<line x1="18.3" y1="223.7" x2="18.3" y2="593.4" stroke="#8c8c8c" stroke-width="1.5"/>
<line x1="42.64" y1="223.7" x2="42.64" y2="593.4" stroke="#008200" stroke-width="1.4"/>
<rect x="430.6" y="69.5" width="149.79999999999995" height="346.64" fill="#242424"/>
<line x1="430.6" y1="69.50" x2="580.4" y2="69.50" stroke="#8c8c8c" stroke-width="1.6"/>
<line x1="424.10" y1="69.50" x2="430.6" y2="69.50" stroke="#d8d8d8" stroke-width="1.6"/>
<line x1="430.6" y1="112.83" x2="580.4" y2="112.83" stroke="#f0f000" stroke-width="1.6"/>
<line x1="424.10" y1="112.83" x2="430.6" y2="112.83" stroke="#d8d8d8" stroke-width="1.6"/>
<line x1="430.6" y1="156.16" x2="580.4" y2="156.16" stroke="#8c8c8c" stroke-width="1.6"/>
<line x1="424.10" y1="156.16" x2="430.6" y2="156.16" stroke="#d8d8d8" stroke-width="1.6"/>
<line x1="430.6" y1="199.49" x2="580.4" y2="199.49" stroke="#0a7a0a" stroke-width="1.6"/>
<line x1="424.10" y1="199.49" x2="430.6" y2="199.49" stroke="#d8d8d8" stroke-width="1.6"/>
<line x1="430.6" y1="242.82" x2="580.4" y2="242.82" stroke="#8c8c8c" stroke-width="1.6"/>
<line x1="424.10" y1="242.82" x2="430.6" y2="242.82" stroke="#d8d8d8" stroke-width="1.6"/>
<line x1="430.6" y1="286.15" x2="580.4" y2="286.15" stroke="#0a7a0a" stroke-width="1.6"/>
<line x1="424.10" y1="286.15" x2="430.6" y2="286.15" stroke="#d8d8d8" stroke-width="1.6"/>
<line x1="430.6" y1="329.48" x2="580.4" y2="329.48" stroke="#8c8c8c" stroke-width="1.6"/>
<line x1="424.10" y1="329.48" x2="430.6" y2="329.48" stroke="#d8d8d8" stroke-width="1.6"/>
<line x1="430.6" y1="372.81" x2="580.4" y2="372.81" stroke="#f0f000" stroke-width="1.6"/>
<line x1="424.10" y1="372.81" x2="430.6" y2="372.81" stroke="#d8d8d8" stroke-width="1.6"/>
<line x1="430.6" y1="416.14" x2="580.4" y2="416.14" stroke="#8c8c8c" stroke-width="1.6"/>
<line x1="424.10" y1="416.14" x2="430.6" y2="416.14" stroke="#d8d8d8" stroke-width="1.6"/>
<line x1="430.6" y1="69.5" x2="430.6" y2="416.14" stroke="#8c8c8c" stroke-width="1.5"/>
<line x1="580.4" y1="69.5" x2="580.4" y2="416.14" stroke="#8c8c8c" stroke-width="1.5"/>
<line x1="430.6" y1="69.5" x2="580.4" y2="69.5" stroke="#8c8c8c" stroke-width="1.5"/>
<line x1="430.6" y1="416.14" x2="580.4" y2="416.14" stroke="#8c8c8c" stroke-width="1.5"/>
<rect x="626.8" y="69.5" width="150.5" height="346.64" fill="#242424"/>
<line x1="626.8" y1="69.50" x2="777.3" y2="69.50" stroke="#8c8c8c" stroke-width="1.6"/>
<line x1="620.30" y1="69.50" x2="626.8" y2="69.50" stroke="#d8d8d8" stroke-width="1.6"/>
<line x1="626.8" y1="112.83" x2="777.3" y2="112.83" stroke="#f0f000" stroke-width="1.6"/>
<line x1="620.30" y1="112.83" x2="626.8" y2="112.83" stroke="#d8d8d8" stroke-width="1.6"/>
<line x1="626.8" y1="156.16" x2="777.3" y2="156.16" stroke="#8c8c8c" stroke-width="1.6"/>
<line x1="620.30" y1="156.16" x2="626.8" y2="156.16" stroke="#d8d8d8" stroke-width="1.6"/>
<line x1="626.8" y1="199.49" x2="777.3" y2="199.49" stroke="#0a7a0a" stroke-width="1.6"/>
<line x1="620.30" y1="199.49" x2="626.8" y2="199.49" stroke="#d8d8d8" stroke-width="1.6"/>
<line x1="626.8" y1="242.82" x2="777.3" y2="242.82" stroke="#8c8c8c" stroke-width="1.6"/>
<line x1="620.30" y1="242.82" x2="626.8" y2="242.82" stroke="#d8d8d8" stroke-width="1.6"/>
<line x1="626.8" y1="286.15" x2="777.3" y2="286.15" stroke="#0a7a0a" stroke-width="1.6"/>
<line x1="620.30" y1="286.15" x2="626.8" y2="286.15" stroke="#d8d8d8" stroke-width="1.6"/>
<line x1="626.8" y1="329.48" x2="777.3" y2="329.48" stroke="#8c8c8c" stroke-width="1.6"/>
<line x1="620.30" y1="329.48" x2="626.8" y2="329.48" stroke="#d8d8d8" stroke-width="1.6"/>
<line x1="626.8" y1="372.81" x2="777.3" y2="372.81" stroke="#f0f000" stroke-width="1.6"/>
<line x1="620.30" y1="372.81" x2="626.8" y2="372.81" stroke="#d8d8d8" stroke-width="1.6"/>
<line x1="626.8" y1="416.14" x2="777.3" y2="416.14" stroke="#8c8c8c" stroke-width="1.6"/>
<line x1="620.30" y1="416.14" x2="626.8" y2="416.14" stroke="#d8d8d8" stroke-width="1.6"/>
<line x1="626.8" y1="69.5" x2="626.8" y2="416.14" stroke="#8c8c8c" stroke-width="1.5"/>
<line x1="777.3" y1="69.5" x2="777.3" y2="416.14" stroke="#8c8c8c" stroke-width="1.5"/>
<line x1="626.8" y1="69.5" x2="777.3" y2="69.5" stroke="#8c8c8c" stroke-width="1.5"/>
<line x1="626.8" y1="416.14" x2="777.3" y2="416.14" stroke="#8c8c8c" stroke-width="1.5"/>
<rect x="822.5" y="69.5" width="165.0" height="346.64" fill="#242424"/>
<line x1="822.5" y1="69.50" x2="987.5" y2="69.50" stroke="#8c8c8c" stroke-width="1.6"/>
<line x1="816.00" y1="69.50" x2="822.5" y2="69.50" stroke="#d8d8d8" stroke-width="1.6"/>
<line x1="822.5" y1="112.83" x2="987.5" y2="112.83" stroke="#f0f000" stroke-width="1.6"/>
<line x1="816.00" y1="112.83" x2="822.5" y2="112.83" stroke="#d8d8d8" stroke-width="1.6"/>
<line x1="822.5" y1="156.16" x2="987.5" y2="156.16" stroke="#8c8c8c" stroke-width="1.6"/>
<line x1="816.00" y1="156.16" x2="822.5" y2="156.16" stroke="#d8d8d8" stroke-width="1.6"/>
<line x1="822.5" y1="199.49" x2="987.5" y2="199.49" stroke="#0a7a0a" stroke-width="1.6"/>
<line x1="816.00" y1="199.49" x2="822.5" y2="199.49" stroke="#d8d8d8" stroke-width="1.6"/>
<line x1="822.5" y1="242.82" x2="987.5" y2="242.82" stroke="#8c8c8c" stroke-width="1.6"/>
<line x1="816.00" y1="242.82" x2="822.5" y2="242.82" stroke="#d8d8d8" stroke-width="1.6"/>
<line x1="822.5" y1="286.15" x2="987.5" y2="286.15" stroke="#0a7a0a" stroke-width="1.6"/>
<line x1="816.00" y1="286.15" x2="822.5" y2="286.15" stroke="#d8d8d8" stroke-width="1.6"/>
<line x1="822.5" y1="329.48" x2="987.5" y2="329.48" stroke="#8c8c8c" stroke-width="1.6"/>
<line x1="816.00" y1="329.48" x2="822.5" y2="329.48" stroke="#d8d8d8" stroke-width="1.6"/>
<line x1="822.5" y1="372.81" x2="987.5" y2="372.81" stroke="#f0f000" stroke-width="1.6"/>
<line x1="816.00" y1="372.81" x2="822.5" y2="372.81" stroke="#d8d8d8" stroke-width="1.6"/>
<line x1="822.5" y1="416.14" x2="987.5" y2="416.14" stroke="#8c8c8c" stroke-width="1.6"/>
<line x1="816.00" y1="416.14" x2="822.5" y2="416.14" stroke="#d8d8d8" stroke-width="1.6"/>
<line x1="822.5" y1="69.5" x2="822.5" y2="416.14" stroke="#8c8c8c" stroke-width="1.5"/>
<line x1="987.5" y1="69.5" x2="987.5" y2="416.14" stroke="#8c8c8c" stroke-width="1.5"/>
<line x1="822.5" y1="69.5" x2="987.5" y2="69.5" stroke="#8c8c8c" stroke-width="1.5"/>
<line x1="822.5" y1="416.14" x2="987.5" y2="416.14" stroke="#8c8c8c" stroke-width="1.5"/>
<rect x="445" y="242" width="120.7" height="5.8" fill="#000"/>
<rect x="446.3" y="243.2" width="118.1" height="3.4" fill="#13819f"/>
<rect x="641" y="242" width="121" height="4.9" fill="#000"/>
<rect x="642.8" y="243.8" width="117.4" height="1.6" fill="#1583a2"/>
<rect x="838.9" y="241.2" width="132.3" height="3.0" fill="#000"/>
<path d="M416.5 617.3 L422.8 612.8 L422.8 621.8 Z" fill="#3a3a3a"/>
<path d="M996.5 617.3 L990.2 612.8 L990.2 621.8 Z" fill="#3a3a3a"/>
<rect x="1051.6" y="74.6" width="653.8" height="500.7" fill="#242424"/></svg>
<svg class="ov" id="fb" width="1717" height="887"><defs><linearGradient id="fbg" x1="0" y1="0" x2="0" y2="1"><stop offset="0" stop-color="#009600"/><stop offset="0.5" stop-color="#009650"/><stop offset="0.62" stop-color="#00968a"/><stop offset="0.8" stop-color="#004a99"/><stop offset="1" stop-color="#000099"/></linearGradient><linearGradient id="fy" gradientUnits="userSpaceOnUse" x1="1294.6" y1="378.8" x2="1363.7" y2="265.4"><stop offset="0" stop-color="#ffffff" stop-opacity="1"/><stop offset="1" stop-color="#ffff00" stop-opacity="1"/></linearGradient><linearGradient id="fc" gradientUnits="userSpaceOnUse" x1="1294.6" y1="378.8" x2="1234.2" y2="356.9"><stop offset="0" stop-color="#ffffff" stop-opacity="1"/><stop offset="1" stop-color="#00ffff" stop-opacity="1"/></linearGradient><linearGradient id="fm" gradientUnits="userSpaceOnUse" x1="1294.6" y1="378.8" x2="1333.0" y2="469.5"><stop offset="0" stop-color="#ffffff" stop-opacity="1"/><stop offset="1" stop-color="#ff00ff" stop-opacity="1"/></linearGradient><linearGradient id="fo" gradientUnits="userSpaceOnUse" x1="1284.8" y1="217.3" x2="1549.0" y2="378.2"><stop offset="0" stop-color="#009600" stop-opacity="1"/><stop offset="1" stop-color="#990000" stop-opacity="1"/></linearGradient><linearGradient id="fp" gradientUnits="userSpaceOnUse" x1="1168.2" y1="539.1" x2="1622.6" y2="416.8"><stop offset="0" stop-color="#000099" stop-opacity="1"/><stop offset="1" stop-color="#990000" stop-opacity="1"/></linearGradient></defs><path d="M1186.9 571.9 L1186.8 571.9 L1186.7 572.0 L1186.5 572.0 L1186.3 572.0 L1186.1 572.0 L1185.8 572.0 L1185.4 572.0 L1184.8 571.9 L1184.0 571.4 L1182.9 570.8 L1181.3 569.8 L1179.4 568.4 L1176.8 566.7 L1173.3 564.4 L1169.0 561.4 L1163.5 557.2 L1156.9 551.1 L1148.1 540.5 L1136.8 523.2 L1122.6 495.8 L1105.0 455.3 L1086.9 399.1 L1069.9 328.9 L1058.0 254.0 L1054.6 184.6 L1062.4 127.8 L1081.8 90.9 L1109.3 78.0 L1140.4 82.5 L1171.8 94.6 L1201.5 109.1 L1230.1 125.3 L1258.2 143.2 L1286.0 162.3 L1313.8 182.2 L1341.6 202.7 L1369.3 223.5 L1396.8 244.3 L1423.7 264.9 L1449.9 284.9 L1475.0 304.1 L1498.7 322.1 L1520.2 338.6 L1538.9 352.9 L1555.4 365.5 L1569.1 375.8 L1580.2 384.4 L1589.1 391.2 L1596.1 396.5 L1601.8 400.9 L1606.6 404.5 L1610.4 407.5 L1613.6 409.8 L1615.9 411.6 L1617.7 413.0 L1619.0 414.0 L1619.8 414.6 L1620.5 415.2 L1621.1 415.6 L1621.6 416.0 L1622.1 416.4 L1622.4 416.6 L1622.6 416.7 L1622.6 416.8 Z" fill="url(#fbg)"/><path d="M1284.8 217.3 L1258.2 143.2 L1396.8 244.3 L1498.7 322.1 L1622.6 416.8 L1549.0 378.2 Z" fill="url(#fo)"/><path d="M1168.2 539.1 L1186.9 571.9 L1622.6 416.8 L1549.0 378.2 Z" fill="url(#fp)"/><path d="M1294.6 378.8 L1549.0 378.2 L1284.8 217.3 Z" fill="url(#fy)"/><path d="M1294.6 378.8 L1284.8 217.3 L1168.2 539.1 Z" fill="url(#fc)"/><path d="M1294.6 378.8 L1168.2 539.1 L1549.0 378.2 Z" fill="url(#fm)"/></svg>
<canvas id="cie" width="653" height="500" style="left:1052px;top:75px;"></canvas>
<svg class="ov" width="1717" height="887"><rect x="1051.6" y="74.6" width="653.8" height="500.7" fill="none" stroke="#8c8c8c" stroke-width="1.5"/>
<line x1="1045.3" y1="574.90" x2="1051.6" y2="574.90" stroke="#e0e0e0" stroke-width="1.6"/>
<line x1="1051.60" y1="575.3" x2="1051.60" y2="581.0" stroke="#e0e0e0" stroke-width="1.6"/>
<line x1="1045.3" y1="516.20" x2="1051.6" y2="516.20" stroke="#e0e0e0" stroke-width="1.6"/>
<line x1="1129.32" y1="575.3" x2="1129.32" y2="581.0" stroke="#e0e0e0" stroke-width="1.6"/>
<line x1="1045.3" y1="457.30" x2="1051.6" y2="457.30" stroke="#e0e0e0" stroke-width="1.6"/>
<line x1="1207.05" y1="575.3" x2="1207.05" y2="581.0" stroke="#e0e0e0" stroke-width="1.6"/>
<line x1="1045.3" y1="397.40" x2="1051.6" y2="397.40" stroke="#e0e0e0" stroke-width="1.6"/>
<line x1="1284.77" y1="575.3" x2="1284.77" y2="581.0" stroke="#e0e0e0" stroke-width="1.6"/>
<line x1="1045.3" y1="338.40" x2="1051.6" y2="338.40" stroke="#e0e0e0" stroke-width="1.6"/>
<line x1="1362.50" y1="575.3" x2="1362.50" y2="581.0" stroke="#e0e0e0" stroke-width="1.6"/>
<line x1="1045.3" y1="278.10" x2="1051.6" y2="278.10" stroke="#e0e0e0" stroke-width="1.6"/>
<line x1="1440.22" y1="575.3" x2="1440.22" y2="581.0" stroke="#e0e0e0" stroke-width="1.6"/>
<line x1="1045.3" y1="219.40" x2="1051.6" y2="219.40" stroke="#e0e0e0" stroke-width="1.6"/>
<line x1="1517.95" y1="575.3" x2="1517.95" y2="581.0" stroke="#e0e0e0" stroke-width="1.6"/>
<line x1="1045.3" y1="158.60" x2="1051.6" y2="158.60" stroke="#e0e0e0" stroke-width="1.6"/>
<line x1="1595.67" y1="575.3" x2="1595.67" y2="581.0" stroke="#e0e0e0" stroke-width="1.6"/>
<line x1="1045.3" y1="99.90" x2="1051.6" y2="99.90" stroke="#e0e0e0" stroke-width="1.6"/>
<line x1="1673.40" y1="575.3" x2="1673.40" y2="581.0" stroke="#e0e0e0" stroke-width="1.6"/>
<rect x="1278.15" y="209.45" width="13.5" height="13.5" fill="none" stroke="#fff" stroke-width="1.5"/>
<rect x="1282.25" y="275.55" width="13.5" height="13.5" fill="none" stroke="#fff" stroke-width="1.5"/>
<rect x="1337.25" y="274.05" width="13.5" height="13.5" fill="none" stroke="#fff" stroke-width="1.5"/>
<rect x="1370.65" y="267.05" width="13.5" height="13.5" fill="none" stroke="#fff" stroke-width="1.5"/>
<rect x="1391.65" y="285.75" width="13.5" height="13.5" fill="none" stroke="#fff" stroke-width="1.5"/>
<rect x="1412.85" y="306.75" width="13.5" height="13.5" fill="none" stroke="#fff" stroke-width="1.5"/>
<rect x="1443.65" y="326.25" width="13.5" height="13.5" fill="none" stroke="#fff" stroke-width="1.5"/>
<rect x="1309.25" y="313.45" width="13.5" height="13.5" fill="none" stroke="#fff" stroke-width="1.5"/>
<rect x="1248.55" y="352.75" width="13.5" height="13.5" fill="none" stroke="#fff" stroke-width="1.5"/>
<rect x="1219.05" y="372.15" width="13.5" height="13.5" fill="none" stroke="#fff" stroke-width="1.5"/>
<rect x="1339.55" y="355.65" width="13.5" height="13.5" fill="none" stroke="#fff" stroke-width="1.5"/>
<rect x="1355.05" y="351.15" width="13.5" height="13.5" fill="none" stroke="#fff" stroke-width="1.5"/>
<rect x="1404.05" y="380.45" width="13.5" height="13.5" fill="none" stroke="#fff" stroke-width="1.5"/>
<rect x="1461.65" y="378.25" width="13.5" height="13.5" fill="none" stroke="#fff" stroke-width="1.5"/>
<rect x="1541.75" y="371.15" width="13.5" height="13.5" fill="none" stroke="#fff" stroke-width="1.5"/>
<rect x="1206.75" y="407.55" width="13.5" height="13.5" fill="none" stroke="#fff" stroke-width="1.5"/>
<rect x="1238.85" y="408.45" width="13.5" height="13.5" fill="none" stroke="#fff" stroke-width="1.5"/>
<rect x="1252.75" y="417.15" width="13.5" height="13.5" fill="none" stroke="#fff" stroke-width="1.5"/>
<rect x="1269.45" y="435.55" width="13.5" height="13.5" fill="none" stroke="#fff" stroke-width="1.5"/>
<rect x="1213.55" y="453.55" width="13.5" height="13.5" fill="none" stroke="#fff" stroke-width="1.5"/>
<rect x="1194.15" y="482.95" width="13.5" height="13.5" fill="none" stroke="#fff" stroke-width="1.5"/>
<rect x="1293.85" y="476.15" width="13.5" height="13.5" fill="none" stroke="#fff" stroke-width="1.5"/>
<rect x="1161.65" y="532.05" width="13.5" height="13.5" fill="none" stroke="#fff" stroke-width="1.5"/>
<rect x="1335.45" y="420.25" width="13.5" height="13.5" fill="none" stroke="#fff" stroke-width="1.5"/>
<rect x="1288" y="370.9" width="14" height="14" fill="none" stroke="#000" stroke-width="2"/>
<circle cx="1287.8" cy="279.9" r="4.7" fill="#4c8a52" stroke="#000" stroke-width="1.3"/>
<circle cx="1342.4" cy="276.9" r="4.7" fill="#a2b04a" stroke="#000" stroke-width="1.3"/>
<circle cx="1400" cy="290.9" r="4.7" fill="#e6c032" stroke="#000" stroke-width="1.3"/>
<circle cx="1422" cy="311.7" r="4.7" fill="#e0a438" stroke="#000" stroke-width="1.3"/>
<circle cx="1454.8" cy="333.8" r="4.7" fill="#d88434" stroke="#000" stroke-width="1.3"/>
<circle cx="1314.4" cy="318.9" r="4.7" fill="#5a6a42" stroke="#000" stroke-width="1.3"/>
<circle cx="1254" cy="357.9" r="4.7" fill="#62b0a2" stroke="#000" stroke-width="1.3"/>
<circle cx="1346.9" cy="361.7" r="4.7" fill="#c09482" stroke="#000" stroke-width="1.3"/>
<circle cx="1361.8" cy="357.9" r="4.7" fill="#725444" stroke="#000" stroke-width="1.3"/>
<circle cx="1413.5" cy="390.6" r="4.7" fill="#c25262" stroke="#000" stroke-width="1.3"/>
<circle cx="1474.1" cy="389.0" r="4.7" fill="#b03444" stroke="#000" stroke-width="1.3"/>
<circle cx="1213.5" cy="414.0" r="4.7" fill="#10829a" stroke="#000" stroke-width="1.3"/>
<circle cx="1245.9" cy="417.0" r="4.7" fill="#6a80a2" stroke="#000" stroke-width="1.3"/>
<circle cx="1259.8" cy="423.9" r="4.7" fill="#8a88b2" stroke="#000" stroke-width="1.3"/>
<circle cx="1277.9" cy="441.9" r="4.7" fill="#644464" stroke="#000" stroke-width="1.3"/>
<circle cx="1220.3" cy="460.3" r="4.7" fill="#5464a2" stroke="#000" stroke-width="1.3"/>
<circle cx="1201.9" cy="490.5" r="4.7" fill="#4444a0" stroke="#000" stroke-width="1.3"/>
<circle cx="1342.2" cy="430.9" r="4.7" fill="#c060a0" stroke="#000" stroke-width="1.3"/>
<circle cx="1293.0" cy="378.6" r="4.7" fill="#a0a0a0" stroke="#000" stroke-width="1.3"/>
<circle cx="1295.1" cy="378.0" r="4.7" fill="#a2a2a2" stroke="#000" stroke-width="1.3"/>
<circle cx="1271.9" cy="421" r="5.2" fill="#000"/>
<rect x="1505.5" y="78.6" width="199" height="154.3" fill="#2e2e2e"/>
<rect x="1508.2" y="82.2" width="190.6" height="147" fill="none" stroke="#9a9a9a" stroke-width="1.6"/>
<rect x="1421.4" y="535.1" width="280.4" height="27.5" fill="#333333"/></svg>
<svg class="ov" id="fb2" width="1717" height="887"><path d="M1509 83 L1630 83 L1577 229 L1509 229 Z" fill="#005a8c"/><path d="M1630 83 L1698 83 L1698 229 L1577 229 Z" fill="#10a0ff"/></svg>
<canvas id="inset" width="189" height="146" style="left:1509px;top:83px;"></canvas>
<svg class="ov" width="1717" height="887"><rect x="1595.4" y="147.8" width="15" height="15" fill="none" stroke="#fff" stroke-width="2"/>
<circle cx="1602.9" cy="155.3" r="5" fill="#007a8e" stroke="#000" stroke-width="1.6"/></svg>
<div class="t" style="left:1451.61px;top:539.00px;font-size:22.16px;color:#f2f2f2;transform:scaleX(0.9241);">RGB Triplet: 0, 133, 163</div>

<script>
(function(){
['fb','fb2'].forEach(function(id){var e=document.getElementById(id); if(e&&e.parentNode){e.parentNode.removeChild(e);}});
var L=[[0.1741, 0.005], [0.174, 0.005], [0.1738, 0.0049], [0.1736, 0.0049], [0.1733, 0.0048], [0.173, 0.0048], [0.1726, 0.0048], [0.1721, 0.0048], [0.1714, 0.0051], [0.1703, 0.0058], [0.1689, 0.0069], [0.1669, 0.0086], [0.1644, 0.0109], [0.1611, 0.0138], [0.1566, 0.0177], [0.151, 0.0227], [0.144, 0.0297], [0.1355, 0.0399], [0.1241, 0.0578], [0.1096, 0.0868], [0.0913, 0.1327], [0.0687, 0.2007], [0.0454, 0.295], [0.0235, 0.4127], [0.0082, 0.5384], [0.0039, 0.6548], [0.0139, 0.7502], [0.0389, 0.812], [0.0743, 0.8338], [0.1142, 0.8262], [0.1547, 0.8059], [0.1929, 0.7816], [0.2296, 0.7543], [0.2658, 0.7243], [0.3016, 0.6923], [0.3373, 0.6589], [0.3731, 0.6245], [0.4087, 0.5896], [0.4441, 0.5547], [0.4788, 0.5202], [0.5125, 0.4866], [0.5448, 0.4544], [0.5752, 0.4242], [0.6029, 0.3965], [0.627, 0.3725], [0.6482, 0.3514], [0.6658, 0.334], [0.6801, 0.3197], [0.6915, 0.3083], [0.7006, 0.2993], [0.7079, 0.292], [0.714, 0.2859], [0.719, 0.2809], [0.723, 0.277], [0.726, 0.274], [0.7283, 0.2717], [0.73, 0.27], [0.7311, 0.2689], [0.732, 0.268], [0.7327, 0.2673], [0.7334, 0.2666], [0.734, 0.266], [0.7344, 0.2656], [0.7346, 0.2654], [0.7347, 0.2653]];
var OF=153;
function col(x,y,out){
  if(y<=0.0001){y=0.0001;}
  var X=x/y, Z=(1-x-y)/y;
  var r= 3.2406*X-1.5372-0.4986*Z;
  var g=-0.9689*X+1.8758+0.0415*Z;
  var b= 0.0557*X-0.2040+1.0570*Z;
  var inside = (r>=0&&g>=0&&b>=0);
  if(r<0)r=0; if(g<0)g=0; if(b<0)b=0;
  var m=Math.max(r,g,b); if(m<=0)m=1;
  var f= inside?255:OF;
  out[0]=r/m*f; out[1]=g/m*f; out[2]=b/m*f;
}
function draw(cv, x0, xs, y0, ys, clip){
  var w=cv.width,h=cv.height;
  var off=document.createElement('canvas'); off.width=w; off.height=h;
  var oc=off.getContext('2d');
  var im=oc.createImageData(w,h), d=im.data, o=[0,0,0], SS=3, n2=SS*SS;
  for(var j=0;j<h;j++){
    for(var i=0;i<w;i++){
      var ar=0,ag=0,ab=0;
      for(var sj=0;sj<SS;sj++){
        var yy=(y0-(j+(sj+0.5)/SS))/ys;
        for(var si=0;si<SS;si++){
          var xx=(i+(si+0.5)/SS-x0)/xs;
          col(xx,yy,o); ar+=o[0]; ag+=o[1]; ab+=o[2];
        }
      }
      var k=(j*w+i)*4; d[k]=ar/n2; d[k+1]=ag/n2; d[k+2]=ab/n2; d[k+3]=255;
    }
  }
  oc.putImageData(im,0,0);
  var c=cv.getContext('2d');
  if(clip){
    c.beginPath();
    var P=[];
    for(var n=0;n<L.length;n++){ P.push([x0+L[n][0]*xs, y0-L[n][1]*ys]); }
    c.moveTo(P[0][0],P[0][1]);
    for(var n=0;n<P.length-1;n++){
      var p0=P[Math.max(0,n-1)], p1=P[n], p2=P[n+1], p3=P[Math.min(P.length-1,n+2)];
      c.bezierCurveTo(p1[0]+(p2[0]-p0[0])/6, p1[1]+(p2[1]-p0[1])/6, p2[0]-(p3[0]-p1[0])/6, p2[1]-(p3[1]-p1[1])/6, p2[0], p2[1]);
    }
    c.closePath();
    c.fillStyle=c.createPattern(off,'no-repeat');
    c.fill();
  } else {
    c.drawImage(off,0,0);
  }
}
var cv=document.getElementById('cie');
draw(cv, -0.400, 777.25, 499.900, 596.0, true);
OF=142;
var iv=document.getElementById('inset');
draw(iv, -877.507, 4663.5, 1032.394, 3562.5, false);
})();
</script>

</body></html>
